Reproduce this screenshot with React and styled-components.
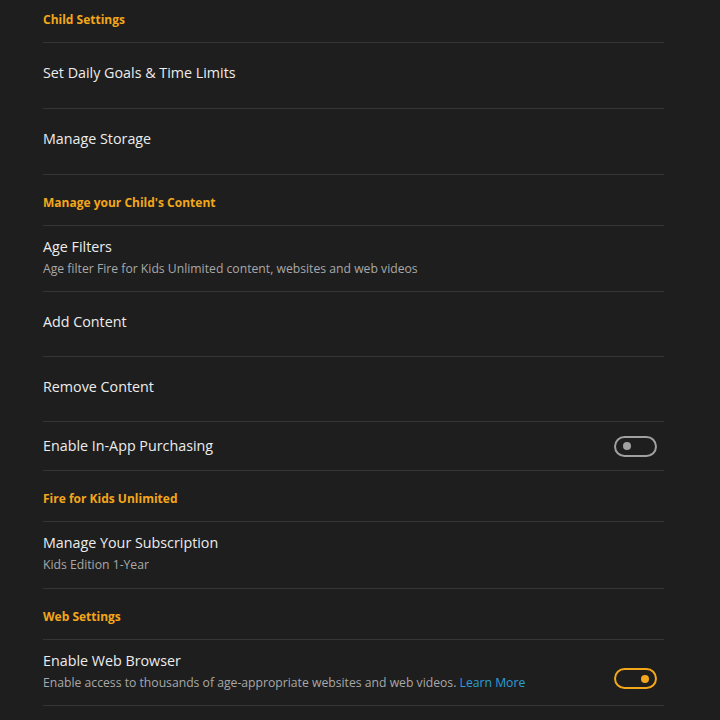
import React from 'react';
import styled, { createGlobalStyle } from 'styled-components';

const color = {
  page: '#1e1e1e',
  line: '#353535',
  text: '#ececec',
  sub: '#a8a8a8',
  accent: '#f2a71b',
  link: '#2b9fd6',
  off: '#a0a0a0',
};

const GlobalStyle = createGlobalStyle`
  html, body {
    margin: 0;
    padding: 0;
    background: ${color.page};
    overflow: hidden;
  }
  body {
    font-family: "Open Sans", "Noto Sans", sans-serif;
    -webkit-font-smoothing: antialiased;
  }
`;

const Screen = styled.div`
  width: 720px;
  height: 720px;
  overflow: hidden;
  background: ${color.page};
`;

// list is scrolled a few pixels past its top
const List = styled.div`
  margin: -8px 56px 0 43px;
  display: flex;
  flex-direction: column;
`;

const SectionHeader = styled.div`
  box-sizing: border-box;
  height: 51px;
  padding-top: 4px;
  display: flex;
  align-items: center;
  border-bottom: 1px solid ${color.line};
  color: ${color.accent};
  font-size: 12px;
  font-weight: 700;
`;

const Row = styled.div`
  box-sizing: border-box;
  height: ${(p) => p.$h}px;
  padding: ${(p) => (p.$sub ? '11px 0 0' : p.$tight ? '0' : '0 0 5px')};
  display: flex;
  align-items: ${(p) => (p.$sub ? 'flex-start' : 'center')};
  justify-content: space-between;
  border-bottom: 1px solid ${color.line};
`;

const Texts = styled.div`
  display: flex;
  flex-direction: column;
  gap: 3px;
`;

const Title = styled.div`
  color: ${color.text};
  font-size: 14.3px;
  line-height: 20px;
`;

const Sub = styled.div`
  color: ${color.sub};
  font-size: 12.2px;
  line-height: 18px;
`;

const Link = styled.span`
  color: ${color.link};
`;

const Toggle = styled.div`
  box-sizing: border-box;
  width: 43px;
  height: 21px;
  margin: ${(p) => (p.$on ? '17px' : '0')} 7px 0 0;
  border: 2px solid ${(p) => (p.$on ? color.accent : color.off)};
  border-radius: 11px;
  display: flex;
  align-items: center;
  justify-content: ${(p) => (p.$on ? 'flex-end' : 'flex-start')};
  padding: 0 6px 0 7px;
  flex-shrink: 0;
  &::after {
    content: '';
    width: 8px;
    height: 8px;
    border-radius: 50%;
    background: ${(p) => (p.$on ? color.accent : color.off)};
  }
`;

const Item = ({ title, sub, toggle, h = 66 }) => (
  <Row $h={h} $sub={!!sub} $tight={toggle !== undefined}>
    <Texts>
      <Title>{title}</Title>
      {sub && <Sub>{sub}</Sub>}
    </Texts>
    {toggle !== undefined && <Toggle $on={toggle} />}
  </Row>
);

const App = () => (
  <Screen>
    <GlobalStyle />
    <List>
      <SectionHeader>Child Settings</SectionHeader>
      <Item title="Set Daily Goals & Time Limits" />
      <Item title="Manage Storage" />

      <SectionHeader>Manage your Child's Content</SectionHeader>
      <Item
        title="Age Filters"
        sub="Age filter Fire for Kids Unlimited content, websites and web videos"
      />
      <Item title="Add Content" h={65} />
      <Item title="Remove Content" h={65} />
      <Item title="Enable In-App Purchasing" h={49} toggle={false} />

      <SectionHeader>Fire for Kids Unlimited</SectionHeader>
      <Item title="Manage Your Subscription" sub="Kids Edition 1-Year" h={67} />

      <SectionHeader>Web Settings</SectionHeader>
      <Item
        title="Enable Web Browser"
        sub={
          <>
            Enable access to thousands of age-appropriate websites and web videos.{' '}
            <Link>Learn More</Link>
          </>
        }
        toggle
      />
    </List>
  </Screen>
);

export default App;
